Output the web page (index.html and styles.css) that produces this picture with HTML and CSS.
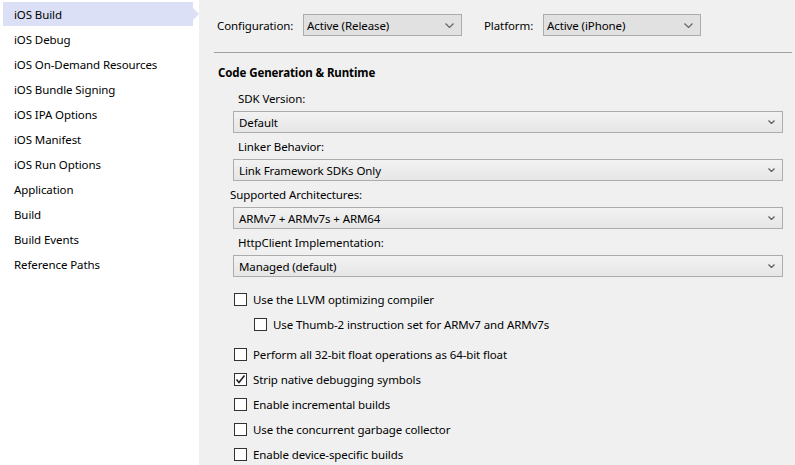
FILE: index.html
```html
<!DOCTYPE html>
<html>
<head>
<meta charset="utf-8">
<link rel="stylesheet" href="styles.css">
</head>
<body>
<div class="app">
  <nav class="sidebar">
    <div class="nav-item selected">iOS Build</div>
    <div class="nav-item">iOS Debug</div>
    <div class="nav-item">iOS On-Demand Resources</div>
    <div class="nav-item">iOS Bundle Signing</div>
    <div class="nav-item">iOS IPA Options</div>
    <div class="nav-item">iOS Manifest</div>
    <div class="nav-item">iOS Run Options</div>
    <div class="nav-item">Application</div>
    <div class="nav-item">Build</div>
    <div class="nav-item">Build Events</div>
    <div class="nav-item">Reference Paths</div>
  </nav>
  <main class="content">
    <div class="topbar">
      <span class="top-label config-label">Configuration:</span>
      <div class="combo combo-flat config-combo"><span>Active (Release)</span><svg class="chev" width="9" height="5" viewBox="0 0 9 5"><polyline points="0.5,0.5 4.5,4.5 8.5,0.5" fill="none" stroke="#606060" stroke-width="1.1"/></svg></div>
      <span class="top-label platform-label">Platform:</span>
      <div class="combo combo-flat platform-combo"><span>Active (iPhone)</span><svg class="chev" width="9" height="5" viewBox="0 0 9 5"><polyline points="0.5,0.5 4.5,4.5 8.5,0.5" fill="none" stroke="#606060" stroke-width="1.1"/></svg></div>
    </div>
    <div class="separator"></div>
    <h2 class="section-title">Code Generation &amp; Runtime</h2>

    <div class="field">
      <div class="field-label">SDK Version:</div>
      <div class="combo combo-grad"><span>Default</span><svg class="chev small" width="7" height="4" viewBox="0 0 7 4"><polyline points="0.5,0.5 3.5,3.5 6.5,0.5" fill="none" stroke="#606060" stroke-width="1.3"/></svg></div>
    </div>
    <div class="field">
      <div class="field-label">Linker Behavior:</div>
      <div class="combo combo-grad"><span>Link Framework SDKs Only</span><svg class="chev small" width="7" height="4" viewBox="0 0 7 4"><polyline points="0.5,0.5 3.5,3.5 6.5,0.5" fill="none" stroke="#606060" stroke-width="1.3"/></svg></div>
    </div>
    <div class="field">
      <div class="field-label outdent">Supported Architectures:</div>
      <div class="combo combo-grad"><span>ARMv7 + ARMv7s + ARM64</span><svg class="chev small" width="7" height="4" viewBox="0 0 7 4"><polyline points="0.5,0.5 3.5,3.5 6.5,0.5" fill="none" stroke="#606060" stroke-width="1.3"/></svg></div>
    </div>
    <div class="field">
      <div class="field-label">HttpClient Implementation:</div>
      <div class="combo combo-grad"><span>Managed (default)</span><svg class="chev small" width="7" height="4" viewBox="0 0 7 4"><polyline points="0.5,0.5 3.5,3.5 6.5,0.5" fill="none" stroke="#606060" stroke-width="1.3"/></svg></div>
    </div>

    <div class="checks">
      <div class="check"><span class="box"></span><span>Use the LLVM optimizing compiler</span></div>
      <div class="check sub"><span class="box"></span><span>Use Thumb-2 instruction set for ARMv7 and ARMv7s</span></div>
      <div class="check gap"><span class="box"></span><span>Perform all 32-bit float operations as 64-bit float</span></div>
      <div class="check"><span class="box"><svg width="11" height="11" viewBox="0 0 11 11"><polyline points="1.5,5.5 4,8.5 9.5,1.5" fill="none" stroke="#202020" stroke-width="1.6"/></svg></span><span>Strip native debugging symbols</span></div>
      <div class="check"><span class="box"></span><span>Enable incremental builds</span></div>
      <div class="check"><span class="box"></span><span>Use the concurrent garbage collector</span></div>
      <div class="check"><span class="box"></span><span>Enable device-specific builds</span></div>
    </div>
  </main>
</div>
</body>
</html>
```

FILE: styles.css
```css
* { box-sizing: border-box; }
html, body {
  margin: 0;
  padding: 0;
  width: 795px;
  height: 465px;
  overflow: hidden;
}
body {
  font-family: "Noto Sans", "Open Sans", "DejaVu Sans", sans-serif;
  font-size: 11.5px;
  letter-spacing: -0.1px;
  color: #000;
  background: #f0f0f0;
}
.app {
  display: flex;
  height: 465px;
}
.sidebar {
  width: 199px;
  flex: none;
  background: #ffffff;
  padding-top: 2px;
}
.nav-item {
  height: 24px;
  line-height: 24px;
  padding-top: 1px;
  margin-bottom: 1px;
  padding-left: 14px;
  white-space: nowrap;
}
.nav-item.selected {
  position: relative;
  margin-left: 3px;
  width: 190px;
  padding-left: 11px;
  background: #dbe0f7;
}
.nav-item.selected::after {
  content: "";
  position: absolute;
  right: -6px;
  top: 6px;
  border-top: 6px solid transparent;
  border-bottom: 6px solid transparent;
  border-left: 6px solid #dbe0f7;
}
.content {
  flex: 1;
  padding-left: 15px;
  padding-right: 3px;
}
.topbar {
  display: flex;
  align-items: center;
  height: 22px;
  margin-top: 14px;
}
.top-label { white-space: nowrap; }
.config-label { margin-left: 3px; width: 86px; }
.platform-label { margin-left: 22px; width: 59px; }
.combo {
  display: flex;
  align-items: center;
  justify-content: space-between;
  height: 22px;
  border: 1px solid #acacac;
  white-space: nowrap;
}
.combo-flat {
  background: #e1e1e1;
  padding: 0 7px 0 3px;
}
.config-combo { width: 159px; }
.platform-combo { width: 158px; }
.combo-grad {
  background: linear-gradient(#f2f2f2, #e6e6e6);
  padding: 0 7px 0 5px;
  margin-left: 19px;
  width: 550px;
}
.chev { flex: none; }
.separator {
  height: 1px;
  background: #a0a0a0;
  margin-top: 16px;
}
.section-title {
  font-size: 11.5px;
  font-weight: bold;
  margin: 12px 0 10px 4px;
  line-height: 16px;
}
.field {
  margin-bottom: 6px;
}
.field-label {
  line-height: 16px;
  height: 16px;
  margin: 0 0 4px 24px;
}
.field-label.outdent { margin-left: 16px; }
.checks {
  margin-top: 10px;
}
.check {
  display: flex;
  align-items: center;
  height: 25px;
  padding-left: 20px;
}
.check.sub { padding-left: 40px; }
.check.gap { margin-top: 5px; }
.box {
  width: 13px;
  height: 13px;
  border: 1px solid #333333;
  background: #ffffff;
  margin-right: 6px;
  flex: none;
  display: flex;
  align-items: center;
  justify-content: center;
}
```
